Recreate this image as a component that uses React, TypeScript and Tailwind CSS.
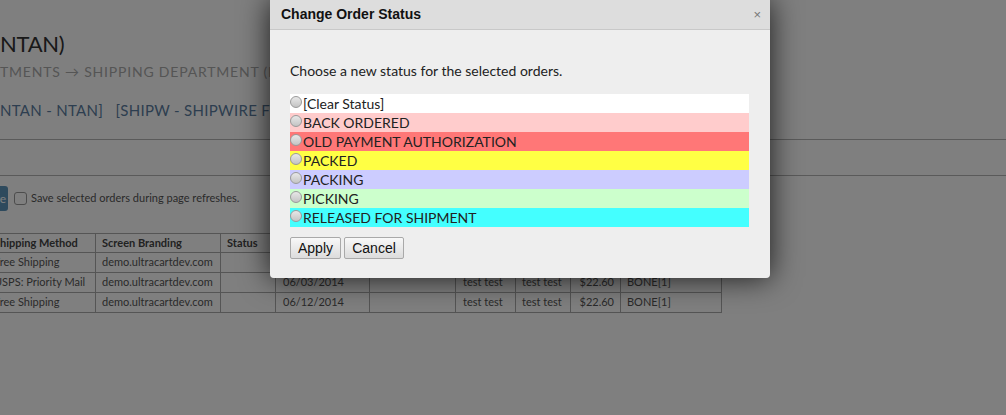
import React from "react";

const statuses = [
  { label: "[Clear Status]", bg: "bg-white" },
  { label: "BACK ORDERED", bg: "bg-[#ffcccc]" },
  { label: "OLD PAYMENT AUTHORIZATION", bg: "bg-[#ff7777]" },
  { label: "PACKED", bg: "bg-[#ffff44]" },
  { label: "PACKING", bg: "bg-[#ccccff]" },
  { label: "PICKING", bg: "bg-[#ccffcc]" },
  { label: "RELEASED FOR SHIPMENT", bg: "bg-[#44ffff]" },
];

const rows = [
  { method: "Free Shipping", date: "06/02/2014" },
  { method: "USPS: Priority Mail", date: "06/03/2014" },
  { method: "Free Shipping", date: "06/12/2014" },
];

function Radio() {
  return (
    <span className="mt-[2px] mr-[1px] block h-[12px] w-[12px] shrink-0 rounded-full border border-[#9a9a9a] bg-gradient-to-b from-[#e8e8e8] to-[#c4c4c4]" />
  );
}

function OrderStatusDialog() {
  return (
    <div className="absolute left-[270px] top-0 w-[500px] rounded-b-[4px] shadow-[0_0_30px_rgba(0,0,0,0.8)]">
      {/* Header */}
      <div className="flex h-[30px] items-center justify-between border-b border-[#c8c8c8] bg-[#dddddd] pl-[11px] pr-[9px] font-['Liberation_Sans',Arial,sans-serif]">
        <span className="text-[14px] font-bold text-[#111]">Change Order Status</span>
        <span className="text-[13px] leading-none text-[#777]">×</span>
      </div>

      {/* Body */}
      <div className="rounded-b-[4px] bg-[#eeeeee] px-[20px] pt-[31px] pb-[19px] font-['Lato',sans-serif]">
        <p className="h-[20px] text-[14px] leading-[20px] text-[#222]">
          Choose a new status for the selected orders.
        </p>
        <div className="mt-[13px] mr-[1px]">
          {statuses.map((s) => (
            <label key={s.label} className={`flex h-[19px] items-start ${s.bg}`}>
              <Radio />
              <span className="text-[14px] leading-[20px] text-[#222]">{s.label}</span>
            </label>
          ))}
        </div>
        <div className="mt-[10px] flex gap-[3px] font-['Liberation_Sans',Arial,sans-serif]">
          <button className="h-[22px] w-[51px] rounded-[2px] border border-[#a9a9a9] bg-gradient-to-b from-[#f8f8f8] to-[#dcdcdc] text-[14px] leading-none text-[#111]">
            Apply
          </button>
          <button className="h-[22px] w-[60px] rounded-[2px] border border-[#a9a9a9] bg-gradient-to-b from-[#f8f8f8] to-[#dcdcdc] text-[14px] leading-none text-[#111]">
            Cancel
          </button>
        </div>
      </div>
    </div>
  );
}

export default function App() {
  return (
    <div className="relative h-[415px] w-[1006px] overflow-hidden bg-white font-['Lato',sans-serif]">
      {/* Page behind the modal */}
      <div className="pt-[28px]">
        <h1 className="h-[32px] whitespace-nowrap text-[22px] leading-[32px] tracking-[-0.3px] text-[#333]">NTAN)</h1>
        <div className="mt-[2px] h-[20px] whitespace-nowrap text-[14px] leading-[20px] tracking-[0.8px] text-[#aaa]">
          TMENTS → SHIPPING DEPARTMENT (NTAN)
        </div>
        <div className="mt-[18px] h-[20px] whitespace-nowrap text-[15px] leading-[20px] tracking-[0.3px] text-[#5b7da0]">
          NTAN - NTAN]&nbsp;&nbsp; [SHIPW - SHIPWIRE FULFILLMENT]
        </div>
        <div className="mt-[19px] border-t border-[#b5b5b5]" />
        <div className="h-[36px] border-b border-[#b5b5b5]" />

        <div className="mt-[10px] flex h-[25px] items-center">
          <button className="-ml-[40px] h-[25px] w-[48px] rounded-[3px] bg-[#5d94bb] pr-[2px] text-right text-[12px] text-white">
            Save
          </button>
          <span className="ml-[6px] h-[13px] w-[13px] rounded-[3px] border border-[#999] bg-white" />
          <span className="ml-[4px] text-[11px] text-[#555]">Save selected orders during page refreshes.</span>
        </div>

        <table className="mt-[22px] -ml-[13px] w-[734px] table-fixed border-collapse text-[11px] text-[#555]">
          <colgroup>
            <col className="w-[108px]" />
            <col className="w-[125px]" />
            <col className="w-[55px]" />
            <col className="w-[94px]" />
            <col className="w-[86px]" />
            <col className="w-[60px]" />
            <col className="w-[55px]" />
            <col className="w-[50px]" />
            <col className="w-[101px]" />
          </colgroup>
          <thead>
            <tr className="h-[19px] text-left font-bold text-[#444]">
              <th className="whitespace-nowrap border border-[#aaa] px-[6px] font-bold">Shipping Method</th>
              <th className="whitespace-nowrap border border-[#aaa] px-[6px] font-bold">Screen Branding</th>
              <th className="border border-[#aaa] px-[6px] font-bold">Status</th>
              <th className="border border-[#aaa] px-[6px] font-bold">Order Date</th>
              <th className="border border-[#aaa] px-[6px] font-bold">Coupon</th>
              <th className="border border-[#aaa] px-[6px] font-bold">Bill To</th>
              <th className="border border-[#aaa] px-[6px] font-bold">Ship To</th>
              <th className="border border-[#aaa] px-[6px] font-bold">Total</th>
              <th className="border border-[#aaa] px-[6px] font-bold">Items</th>
            </tr>
          </thead>
          <tbody>
            {rows.map((r) => (
              <tr key={r.date} className="h-[20px]">
                <td className="whitespace-nowrap border border-[#aaa] px-[6px]">{r.method}</td>
                <td className="whitespace-nowrap border border-[#aaa] px-[6px]">demo.ultracartdev.com</td>
                <td className="border border-[#aaa] px-[6px]"></td>
                <td className="border border-[#aaa] px-[7px]">{r.date}</td>
                <td className="border border-[#aaa] px-[6px]"></td>
                <td className="whitespace-nowrap border border-[#aaa] px-[7px]">test test</td>
                <td className="whitespace-nowrap border border-[#aaa] px-[6px]">test test</td>
                <td className="border border-[#aaa] px-[6px] text-right">$22.60</td>
                <td className="border border-[#aaa] px-[6px]">BONE[1]</td>
              </tr>
            ))}
          </tbody>
        </table>
      </div>

      {/* Modal overlay */}
      <div className="absolute inset-0 bg-black/50" />
      <OrderStatusDialog />
    </div>
  );
}
